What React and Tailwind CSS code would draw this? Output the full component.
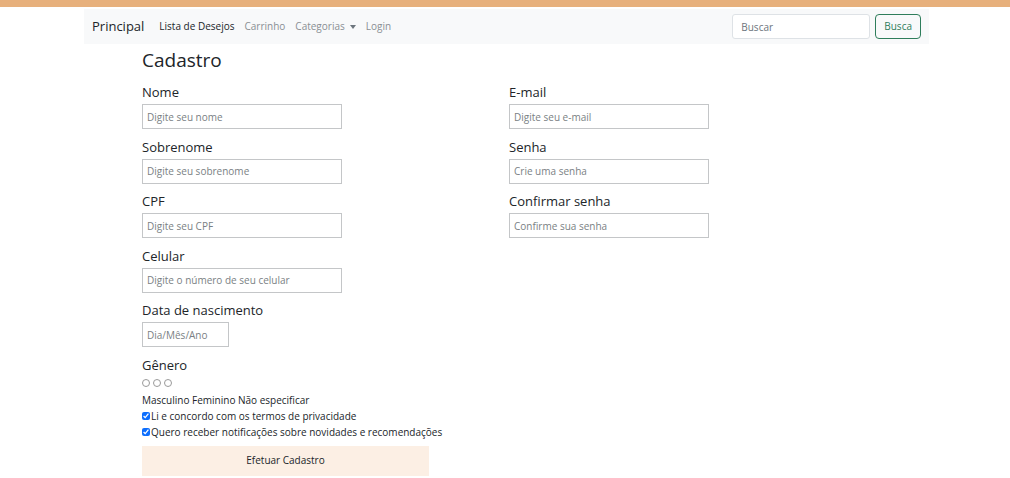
import { useState } from 'react';

function Field({ label, placeholder, width = 'w-[200px]' }) {
  return (
    <div className="flex flex-col">
      <label className="text-[13px] leading-[15px] text-[#212529]">{label}</label>
      <input
        type="text"
        placeholder={placeholder}
        className={`${width} mt-[4px] h-[25px] border border-[#c4c6c8] px-[4px] text-[10px] placeholder:text-[#7a7f84] outline-none`}
      />
    </div>
  );
}

export default function App() {
  const [terms, setTerms] = useState(true);
  const [news, setNews] = useState(true);

  return (
    <div className="w-[1010px] h-[478px] bg-white overflow-hidden font-['Open_Sans',sans-serif] text-[#212529]">
      {/* top bar */}
      <div className="h-[7px] bg-[#e7b07c]" />

      {/* navbar */}
      <nav className="mx-[84px] mt-[2px] h-[35px] bg-[#f8f9fa] flex items-center px-[8px] w-[845px]">
        <span className="text-[13px] text-[#212529] mr-[15px]">Principal</span>
        <div className="flex items-center gap-[10px] text-[10px]">
          <span className="text-[#212529]">Lista de Desejos</span>
          <span className="text-[#8a8f94]">Carrinho</span>
          <span className="text-[#8a8f94] flex items-center gap-[5px]">
            Categorias
            <span className="w-0 h-0 border-l-[3.5px] border-r-[3.5px] border-t-[4px] border-l-transparent border-r-transparent border-t-[#6c757d]" />
          </span>
          <span className="text-[#8a8f94]">Login</span>
        </div>
        <div className="ml-auto flex items-center gap-[5px]">
          <input
            type="text"
            placeholder="Buscar"
            className="w-[138px] h-[25px] border border-[#dee2e6] rounded-[3px] bg-white px-[8px] text-[10px] placeholder:text-[#6c757d] outline-none"
          />
          <button className="h-[25px] px-[8px] border border-[#2e7d5b] rounded-[4px] text-[10px] text-[#2e7d5b]">
            Busca
          </button>
        </div>
      </nav>

      {/* form */}
      <div className="ml-[142px] mt-[3px]">
        <h1 className="text-[19px] leading-[26px]">Cadastro</h1>
        <div className="flex mt-[12px]">
          <div className="w-[367px] flex flex-col gap-[10.6px]">
            <Field label="Nome" placeholder="Digite seu nome" />
            <Field label="Sobrenome" placeholder="Digite seu sobrenome" />
            <Field label="CPF" placeholder="Digite seu CPF" />
            <Field label="Celular" placeholder="Digite o número de seu celular" />
            <Field label="Data de nascimento" placeholder="Dia/Mês/Ano" width="w-[87px]" />
            <div className="flex flex-col">
              <span className="text-[13px] leading-[15px]">Gênero</span>
              <div className="flex gap-[3px] mt-[6px]">
                <span className="w-[8px] h-[8px] rounded-full border border-[#9a9a9a]" />
                <span className="w-[8px] h-[8px] rounded-full border border-[#9a9a9a]" />
                <span className="w-[8px] h-[8px] rounded-full border border-[#9a9a9a]" />
              </div>
              <span className="text-[10px] leading-[16px] mt-[5px]">Masculino Feminino Não especificar</span>
              <label className="flex items-center text-[10px] leading-[16px]">
                <input type="checkbox" checked={terms} onChange={() => setTerms(!terms)} className="w-[8px] h-[8px] m-0 mr-[1px] accent-[#0d6efd]" />
                Li e concordo com os termos de privacidade
              </label>
              <label className="flex items-center text-[10px] leading-[16px]">
                <input type="checkbox" checked={news} onChange={() => setNews(!news)} className="w-[8px] h-[8px] m-0 mr-[1px] accent-[#0d6efd]" />
                Quero receber notificações sobre novidades e recomendações
              </label>
              <button className="mt-[6px] w-[287px] h-[30px] bg-[#fcefe4] text-[10px] text-[#212529]">
                Efetuar Cadastro
              </button>
            </div>
          </div>
          <div className="w-[200px] flex flex-col gap-[10.6px]">
            <Field label="E-mail" placeholder="Digite seu e-mail" />
            <Field label="Senha" placeholder="Crie uma senha" />
            <Field label="Confirmar senha" placeholder="Confirme sua senha" />
          </div>
        </div>
      </div>
    </div>
  );
}
